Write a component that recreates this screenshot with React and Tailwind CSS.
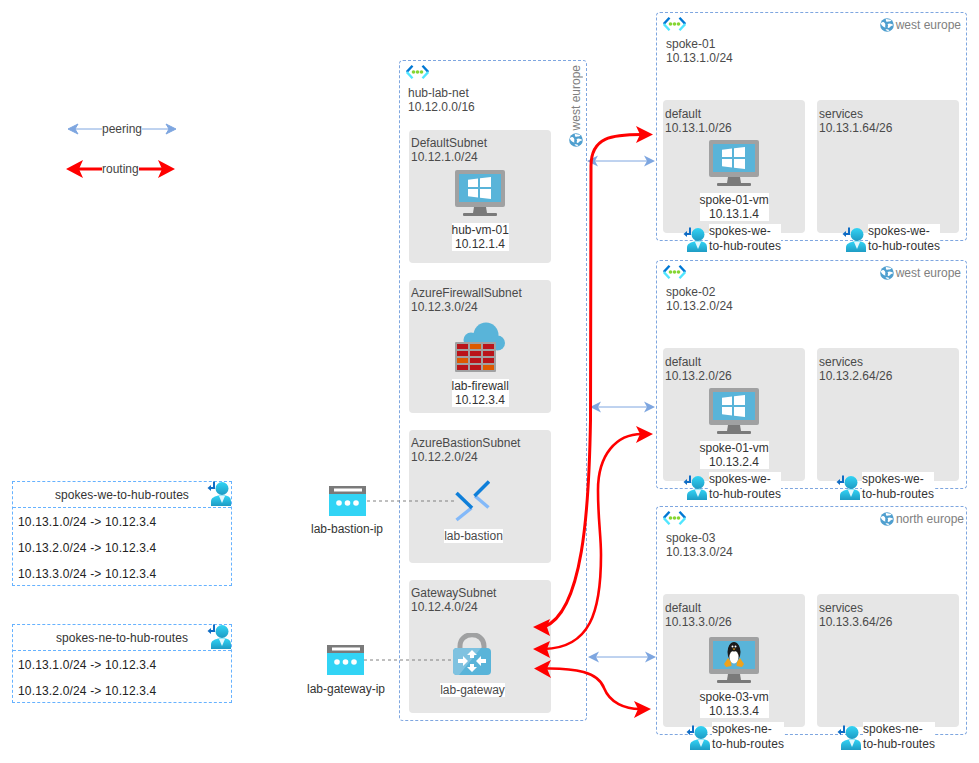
import { useId } from 'react';

const VNetIcon = () => (
  <svg width="23" height="14" viewBox="0 0 23 14" className="block shrink-0">
    <path d="M6.5 0.8 L0.8 7" stroke="#0078D4" strokeWidth="2.4" fill="none" />
    <path d="M0.8 7 L6.5 13.2" stroke="#50E6FF" strokeWidth="2.4" fill="none" />
    <path d="M16.5 0.8 L22.2 7" stroke="#0078D4" strokeWidth="2.4" fill="none" />
    <path d="M22.2 7 L16.5 13.2" stroke="#50E6FF" strokeWidth="2.4" fill="none" />
    <circle cx="7.5" cy="7" r="1.8" fill="#86D633" />
    <circle cx="11.5" cy="7" r="1.8" fill="#86D633" />
    <circle cx="15.5" cy="7" r="1.8" fill="#86D633" />
  </svg>
);

const GlobeIcon = () => (
  <svg width="14" height="14" viewBox="0 0 14 14" className="block shrink-0">
    <circle cx="7" cy="7" r="6.8" fill="#4F9FCF" />
    <path d="M1 5 C3 3.5 4 4 5 5.5 C6 7 4.5 8 5.5 9.5 C4 9.5 2 8 1 6 Z" fill="#fff" />
    <path d="M6 1 C8 1.5 10 1 11.5 2.5 C10 4 8 3 7 4 C6 3.5 5.5 2 6 1 Z" fill="#fff" />
    <path d="M7.5 6 C9.5 5 11.5 5.5 13.5 7 C12.5 8 11 7.5 10 9 C9 10.5 8 10 7.5 9 C8.5 8 8 7 7.5 6 Z" fill="#fff" />
    <path d="M5.5 11.5 C7 11 8.5 11.5 9.5 12.5 C8 13.2 6.5 13 5.5 11.5 Z" fill="#fff" />
  </svg>
);

const Monitor = ({ children }) => (
  <svg width="50" height="46" viewBox="0 0 50 46" className="block shrink-0">
    <rect x="0" y="0" width="50" height="37" rx="2" fill="#A0A1A2" />
    <rect x="4" y="4" width="42" height="28" fill="#59B4D9" />
    <path d="M19 37 H31 L32 43 H18 Z" fill="#7A7A7A" />
    <rect x="8" y="43" width="34" height="3" rx="1" fill="#7A7A7A" />
    {children}
  </svg>
);

const WindowsVm = () => (
  <Monitor>
    <path d="M13 9.8 L23 8.5 V17 H13 Z M25 8.2 L36 7 V17 H25 Z M13 19 H23 V27.5 L13 26.2 Z M25 19 H36 V29 L25 27.8 Z" fill="#fff" />
  </Monitor>
);

const LinuxVm = () => (
  <Monitor>
    <ellipse cx="25" cy="15" rx="6.5" ry="10" fill="#1a1a1a" />
    <ellipse cx="25" cy="20" rx="4.6" ry="6.5" fill="#fff" />
    <circle cx="25" cy="10" r="4.6" fill="#1a1a1a" />
    <circle cx="23.5" cy="9.5" r="1" fill="#fff" />
    <circle cx="26.5" cy="9.5" r="1" fill="#fff" />
    <path d="M23.5 11.5 H26.5 L25 13.2 Z" fill="#EFA21B" />
    <path d="M15 27 L19 21 L22 25 L22.5 29 L17 30 Z M35 27 L31 21 L28 25 L27.5 29 L33 30 Z" fill="#EFA21B" />
  </Monitor>
);

const FirewallIcon = () => {
  const red = '#BA141A';
  const orange = '#DD5900';
  const rows = [
    [red, orange, red],
    [red, red, red],
    [orange, red, red],
    [red, red, orange],
  ];
  const cols = [2, 15, 28];
  const ys = [22, 29, 36, 43];
  return (
    <svg width="50" height="50" viewBox="0 0 50 50" className="block shrink-0">
      <circle cx="31" cy="13" r="12.5" fill="#59B4D9" />
      <circle cx="42.5" cy="21" r="7.5" fill="#59B4D9" />
      <circle cx="16" cy="18" r="7.5" fill="#59B4D9" />
      <rect x="14" y="18" width="30" height="10" fill="#59B4D9" />
      <rect x="0" y="20" width="41" height="30" rx="1" fill="#A0A1A2" />
      {rows.map((row, r) =>
        row.map((color, c) => (
          <rect key={`${r}-${c}`} x={cols[c]} y={ys[r]} width="11" height="5" fill={color} />
        ))
      )}
    </svg>
  );
};

const BastionIcon = () => (
  <svg width="35" height="42" viewBox="0 0 35 42" className="block shrink-0">
    <path d="M33.5 27.5 L20 16" stroke="#83B9F9" strokeWidth="3.4" fill="none" />
    <path d="M34 1.5 L19.5 16" stroke="#0F7FD9" strokeWidth="3.6" fill="none" />
    <path d="M1.5 40 L16.5 28" stroke="#83B9F9" strokeWidth="3.4" fill="none" />
    <path d="M1.5 13 L17 28" stroke="#0F7FD9" strokeWidth="3.6" fill="none" />
  </svg>
);

const GatewayIcon = () => (
  <svg width="38" height="42" viewBox="0 0 38 42" className="block shrink-0">
    <path d="M7 17 V13 C7 -2 31 -2 31 13 V17" stroke="#A0A1A2" strokeWidth="5" fill="none" />
    <rect x="0" y="15" width="38" height="27" rx="4" fill="#59B4D9" />
    <path d="M4 15 H28 L6 42 H4 C1.5 42 0 40.5 0 38 V19 C0 16.5 1.5 15 4 15 Z" fill="#7FC2E0" />
    <path d="M19 17 L24 22 H21 V25 H17 V22 H14 Z" fill="#fff" />
    <path d="M19 39 L14 34 H17 V31 H21 V34 H24 Z" fill="#fff" />
    <path d="M15 28 L10 33 V30 H5 V26 H10 V23 Z" fill="#fff" />
    <path d="M23 28 L28 23 V26 H33 V30 H28 V33 Z" fill="#fff" />
  </svg>
);

const PublicIpIcon = () => (
  <svg width="37" height="30" viewBox="0 0 37 30" className="block shrink-0">
    <rect x="0" y="0" width="37" height="8" fill="#7A7A7A" />
    <rect x="5" y="2.5" width="28" height="3" fill="#fff" />
    <rect x="0" y="8" width="37" height="22" fill="#32D4F5" />
    <circle cx="10" cy="17" r="2.8" fill="#fff" />
    <circle cx="18.5" cy="17" r="2.8" fill="#fff" />
    <circle cx="27" cy="17" r="2.8" fill="#fff" />
  </svg>
);

const RouteIcon = () => {
  const id = useId();
  return (
    <svg width="24" height="25" viewBox="0 0 24 25" className="block shrink-0">
      <defs>
        <linearGradient id={id} x1="0" y1="0" x2="0" y2="1">
          <stop offset="0" stopColor="#32D4F5" />
          <stop offset="1" stopColor="#1E9BC4" />
        </linearGradient>
      </defs>
      <path d="M7 0.5 V7 H2.5" stroke="#0F6CC4" strokeWidth="2" fill="none" />
      <path d="M4 4 L0.5 7 L4 10 Z" fill="#0F6CC4" />
      <circle cx="15" cy="7.5" r="6.5" fill={`url(#${id})`} />
      <path d="M4 25 V20.5 C4 16.5 8 15.5 11 14.5 H19 C22 15.5 24 16.5 24 20.5 V25 Z" fill={`url(#${id})`} />
      <path d="M12 15 H18 L15 22 Z" fill="#E4F8FD" />
    </svg>
  );
};

const RouteTag = ({ lines, pos }) => (
  <div className={`absolute flex items-start gap-[2px] ${pos}`}>
    <div className="mt-[3px]"><RouteIcon /></div>
    <div className="w-[72px] whitespace-nowrap bg-white leading-[15px] tracking-[0.05px] text-[#333]">
      <div>{lines[0]}</div>
      <div>{lines[1]}</div>
    </div>
  </div>
);

const CenterLabel = ({ lines, width }) => (
  <div className={`mt-[7px] self-center whitespace-nowrap bg-white text-center text-[#333] ${width}`}>
    {lines.map((l) => <div key={l}>{l}</div>)}
  </div>
);

const SubnetTitle = ({ name, cidr }) => (
  <div className="pl-[2px] text-[#4a4a4a]">
    <div>{name}</div>
    <div>{cidr}</div>
  </div>
);

const Spoke = ({ pos, name, cidr, region, regionPos, defaultCidr, servicesCidr, vm, vmGap, vmIcon, defaultTag, servicesTag, tagLines }) => (
  <div className={`absolute left-[656px] flex h-[229px] w-[311px] flex-col rounded-[4px] border border-dashed border-[#7EA6E0] ${pos}`}>
    <div className="ml-[6px] mt-[4px]"><VNetIcon /></div>
    <div className="mt-[6px] pl-[9px] text-[#4a4a4a]">
      <div>{name}</div>
      <div>{cidr}</div>
    </div>
    <div className={`absolute top-[5px] flex items-center gap-[2px] text-[#808080] ${regionPos}`}>
      <GlobeIcon />
      <span>{region}</span>
    </div>
    <div className="mb-[7px] mt-auto flex gap-[12px] px-[6px]">
      <div className="relative flex h-[133px] w-[142px] flex-col rounded-[4px] bg-[#e6e6e6] pt-[7px]">
        <SubnetTitle name="default" cidr={defaultCidr} />
        <div className={`self-center ${vmGap}`}>{vmIcon}</div>
        <CenterLabel lines={[vm, defaultCidr.replace(/\.0\/26$/, '.4')]} width="w-[69px]" />
        <RouteTag lines={tagLines} pos={defaultTag} />
      </div>
      <div className="relative h-[133px] w-[142px] rounded-[4px] bg-[#e6e6e6] pt-[7px]">
        <SubnetTitle name="services" cidr={servicesCidr} />
        <RouteTag lines={tagLines} pos={servicesTag} />
      </div>
    </div>
  </div>
);

const RouteTable = ({ pos, title, rows }) => (
  <div className={`absolute left-[12px] w-[220px] border border-dashed border-[#66B2FF] text-[#222] ${pos}`}>
    <div className="flex h-[26px] items-center justify-center border-b border-dashed border-[#66B2FF] tracking-[0.05px] text-[#333]">{title}</div>
    {rows.map((r) => (
      <div key={r} className="flex h-[26px] items-center pl-[5px] pt-[1px] tracking-[0.16px]">{r}</div>
    ))}
    <div className="absolute right-[0px] top-[-1px]"><RouteIcon /></div>
  </div>
);

const Arrows = () => (
  <svg width="979" height="763" viewBox="0 0 979 763" className="absolute left-0 top-0">
    {/* legend */}
    <path d="M72 129 H172" stroke="#7EA6E0" strokeWidth="1" />
    <path d="M68 129 L78 124 L75 129 L78 134 Z M176 129 L166 124 L169 129 L166 134 Z" fill="#7EA6E0" stroke="#7EA6E0" />
    <path d="M76 169 H166" stroke="#ff0000" strokeWidth="3" />
    <path d="M66 169 L83 160 L79 169 L83 178 Z M175 169 L158 160 L162 169 L158 178 Z" fill="#ff0000" />

    {/* peering */}
    <path d="M592 161 H650" stroke="#7EA6E0" strokeWidth="1" />
    <path d="M587 161 L598 155.5 L595 161 L598 166.5 Z M655 161 L644 155.5 L647 161 L644 166.5 Z" fill="#7EA6E0" />
    <path d="M595 407 H650" stroke="#7EA6E0" strokeWidth="1" />
    <path d="M590 407 L601 401.5 L598 407 L601 412.5 Z M655 407 L644 401.5 L647 407 L644 412.5 Z" fill="#7EA6E0" />
    <path d="M593 657 H651" stroke="#7EA6E0" strokeWidth="1" />
    <path d="M588 657 L599 651.5 L596 657 L599 662.5 Z M656 657 L645 651.5 L648 657 L645 662.5 Z" fill="#7EA6E0" />

    {/* routing */}
    <path d="M642 134.5 C612 134.5 591 137 591 166 L590.5 420 C589 510 583 612 544 627" stroke="#ff0000" strokeWidth="3" fill="none" />
    <path d="M653 134.5 L636 126 L640 134.5 L636 143 Z" fill="#ff0000" />
    <path d="M533 627 L550 619 L547 627 L550 636 Z" fill="#ff0000" />
    <path d="M642 434 C616 434 598 455 598 490 C598 520 601 535 601 555 C601 612 590 648 544 649" stroke="#ff0000" strokeWidth="2.6" fill="none" />
    <path d="M653 434 L636 426 L640 434 L636 443 Z" fill="#ff0000" />
    <path d="M533 649 L550 641 L547 649 L550 658 Z" fill="#ff0000" />
    <path d="M545 668.5 C575 668 598 672 604 688 C610 703 625 709 640 709" stroke="#ff0000" strokeWidth="2.6" fill="none" />
    <path d="M534 668.5 L551 660 L547 668.5 L551 678 Z" fill="#ff0000" />
    <path d="M651 709 L634 701 L638 709 L634 718 Z" fill="#ff0000" />

    {/* ip to resource links */}
    <path d="M367 501 H454" stroke="#808080" strokeDasharray="3 3" />
    <path d="M364 660 H453" stroke="#808080" strokeDasharray="3 3" />
  </svg>
);

export default function App() {
  return (
    <div className="relative h-[763px] w-[979px] overflow-hidden bg-white font-['Liberation_Sans',Arial,sans-serif] text-[12px] leading-[14px]">
      {/* hub */}
      <div className="absolute left-[399px] top-[60px] flex h-[661px] w-[188px] flex-col rounded-[4px] border border-dashed border-[#7EA6E0]">
        <div className="ml-[6px] mt-[4px]"><VNetIcon /></div>
        <div className="mt-[7px] pl-[8px] text-[#4a4a4a]">
          <div>hub-lab-net</div>
          <div>10.12.0.0/16</div>
        </div>
        <div className="absolute right-[3px] top-[4px] flex w-[14px] flex-col items-center gap-[3px] text-[#808080]">
          <span className="rotate-180 whitespace-nowrap [writing-mode:vertical-rl]">west europe</span>
          <GlobeIcon />
        </div>
        <div className="ml-[9px] mt-[16px] flex w-[142px] flex-col gap-[17px]">
          <div className="flex h-[133px] flex-col rounded-[4px] bg-[#e6e6e6] pt-[6px]">
            <SubnetTitle name="DefaultSubnet" cidr="10.12.1.0/24" />
            <div className="mt-[6px] self-center"><WindowsVm /></div>
            <CenterLabel lines={['hub-vm-01', '10.12.1.4']} width="w-[57px]" />
          </div>
          <div className="flex h-[133px] flex-col rounded-[4px] bg-[#e6e6e6] pt-[6px]">
            <SubnetTitle name="AzureFirewallSubnet" cidr="10.12.3.0/24" />
            <div className="mt-[8px] self-center"><FirewallIcon /></div>
            <CenterLabel lines={['lab-firewall', '10.12.3.4']} width="w-[57px]" />
          </div>
          <div className="flex h-[133px] flex-col rounded-[4px] bg-[#e6e6e6] pt-[6px]">
            <SubnetTitle name="AzureBastionSubnet" cidr="10.12.2.0/24" />
            <div className="ml-[46px] mt-[16px]"><BastionIcon /></div>
            <div className="ml-[35px] mt-[7px] w-[59px] bg-white text-center text-[#4a4a4a]">lab-bastion</div>
          </div>
          <div className="flex h-[133px] flex-col rounded-[4px] bg-[#e6e6e6] pt-[6px]">
            <SubnetTitle name="GatewaySubnet" cidr="10.12.4.0/24" />
            <div className="ml-[44px] mt-[19px]"><GatewayIcon /></div>
            <div className="ml-[31px] mt-[8px] w-[65px] bg-white text-center text-[#4a4a4a]">lab-gateway</div>
          </div>
        </div>
      </div>

      <Spoke
        pos="top-[12px]"
        name="spoke-01"
        cidr="10.13.1.0/24"
        region="west europe"
        regionPos="right-[5px]"
        defaultCidr="10.13.1.0/26"
        servicesCidr="10.13.1.64/26"
        vm="spoke-01-vm"
        vmGap="mt-[5px]"
        vmIcon={<WindowsVm />}
        defaultTag="left-[20px] top-[124px]"
        servicesTag="left-[25px] top-[124px]"
        tagLines={['spokes-we-', 'to-hub-routes']}
      />
      <Spoke
        pos="top-[260px]"
        name="spoke-02"
        cidr="10.13.2.0/24"
        region="west europe"
        regionPos="right-[5px]"
        defaultCidr="10.13.2.0/26"
        servicesCidr="10.13.2.64/26"
        vm="spoke-01-vm"
        vmGap="mt-[5px]"
        vmIcon={<WindowsVm />}
        defaultTag="left-[20px] top-[124px]"
        servicesTag="left-[19px] top-[124px]"
        tagLines={['spokes-we-', 'to-hub-routes']}
      />
      <Spoke
        pos="top-[506px]"
        name="spoke-03"
        cidr="10.13.3.0/24"
        region="north europe"
        regionPos="right-[2px]"
        defaultCidr="10.13.3.0/26"
        servicesCidr="10.13.3.64/26"
        vm="spoke-03-vm"
        vmGap="mt-[8px]"
        vmIcon={<LinuxVm />}
        defaultTag="left-[23px] top-[128px]"
        servicesTag="left-[20px] top-[128px]"
        tagLines={['spokes-ne-', 'to-hub-routes']}
      />

      <RouteTable
        pos="top-[481px] h-[105px]"
        title="spokes-we-to-hub-routes"
        rows={['10.13.1.0/24 -> 10.12.3.4', '10.13.2.0/24 -> 10.12.3.4', '10.13.3.0/24 -> 10.12.3.4']}
      />
      <RouteTable
        pos="top-[624px] h-[79px]"
        title="spokes-ne-to-hub-routes"
        rows={['10.13.1.0/24 -> 10.12.3.4', '10.13.2.0/24 -> 10.12.3.4']}
      />

      <div className="absolute left-[329px] top-[486px]"><PublicIpIcon /></div>
      <div className="absolute left-[297px] top-[522px] w-[100px] text-center text-[#333]">lab-bastion-ip</div>
      <div className="absolute left-[327px] top-[645px]"><PublicIpIcon /></div>
      <div className="absolute left-[296px] top-[682px] w-[100px] text-center text-[#333]">lab-gateway-ip</div>

      <Arrows />

      <div className="absolute left-[102px] top-[122px] bg-white text-[#444]">peering</div>
      <div className="absolute left-[102px] top-[162px] bg-white text-[#444]">routing</div>
    </div>
  );
}
